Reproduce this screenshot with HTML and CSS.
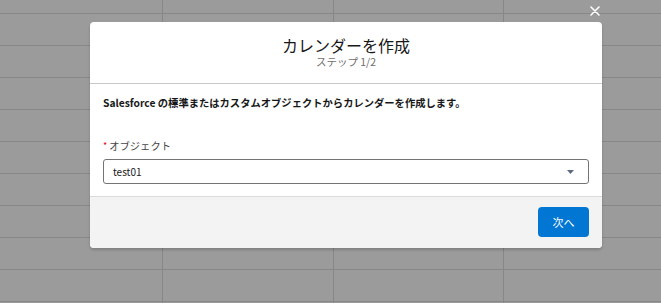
FILE: index.html
```html
<!DOCTYPE html>
<html lang="ja">
<head>
<meta charset="utf-8">
<title>カレンダーを作成</title>
<link rel="stylesheet" href="styles.css">
</head>
<body>
<div class="backdrop">
  <button class="close" aria-label="閉じる">
    <svg width="10" height="10" viewBox="0 0 10 10"><path d="M1 1 L9 9 M9 1 L1 9" stroke="#fff" stroke-width="1.6" stroke-linecap="round"/></svg>
  </button>
  <div class="modal">
    <header class="modal-header">
      <h2 class="title">カレンダーを作成</h2>
      <p class="subtitle">ステップ 1/2</p>
    </header>
    <div class="modal-body">
      <p class="intro">Salesforce の標準またはカスタムオブジェクトからカレンダーを作成します。</p>
      <label class="label"><abbr class="req">*</abbr>オブジェクト</label>
      <div class="select">
        <span class="select-value">test01</span>
        <svg class="caret" width="7" height="4" viewBox="0 0 7 4"><path d="M0 0 H7 L3.5 4 Z" fill="#5c6b80"/></svg>
      </div>
    </div>
    <footer class="modal-footer">
      <button class="btn-next">次へ</button>
    </footer>
  </div>
</div>
</body>
</html>
```
FILE: styles.css
```css
html, body {
  margin: 0;
  padding: 0;
}
body {
  width: 661px;
  height: 303px;
  overflow: hidden;
  font-family: "Noto Sans CJK JP", "Noto Sans", sans-serif;
}
.backdrop {
  position: relative;
  width: 661px;
  height: 303px;
  background-color: #9b9b9b;
  background-image:
    linear-gradient(90deg, transparent 162px, #878787 162px, #878787 163px, transparent 163px),
    linear-gradient(90deg, transparent 333px, #878787 333px, #878787 334px, transparent 334px),
    linear-gradient(90deg, transparent 503px, #878787 503px, #878787 504px, transparent 504px),
    repeating-linear-gradient(180deg, transparent 0, transparent 13px, #878787 13px, #878787 14px, transparent 14px, transparent 32px);
}
.close {
  position: absolute;
  left: 590px;
  top: 6px;
  width: 10px;
  height: 10px;
  padding: 0;
  border: 0;
  background: transparent;
  display: flex;
}
.modal {
  position: absolute;
  left: 90px;
  top: 22px;
  width: 512px;
  background: #fff;
  border-radius: 4px;
  box-shadow: 0 2px 3px rgba(0, 0, 0, 0.18);
}
.modal-header {
  height: 62px;
  box-sizing: border-box;
  padding-top: 13px;
  border-bottom: 1px solid #c9c9c9;
  display: flex;
  flex-direction: column;
  align-items: center;
}
.title {
  margin: 0;
  font-size: 16px;
  line-height: 20px;
  font-weight: 400;
  color: #181818;
}
.subtitle {
  margin: 1px 0 0;
  font-size: 10.5px;
  line-height: 12px;
  color: #706e6b;
}
.modal-body {
  padding: 12px 13px 12px;
}
.intro {
  margin: 0;
  font-size: 10.3px;
  line-height: 14px;
  font-weight: 700;
  color: #181818;
}
.label {
  display: flex;
  align-items: center;
  margin-top: 29px;
  font-size: 10.3px;
  line-height: 14px;
  color: #444;
}
.req {
  color: #ea001e;
  text-decoration: none;
  font-size: 9px;
  margin-right: 2px;
}
.select {
  margin-top: 6px;
  height: 25px;
  box-sizing: border-box;
  border: 1px solid #747474;
  border-radius: 3px;
  display: flex;
  align-items: center;
  justify-content: space-between;
  padding: 0 14px 0 9px;
}
.select-value {
  font-size: 10px;
  color: #181818;
}
.modal-footer {
  border-top: 1px solid #dddbda;
  background: #f3f3f3;
  border-radius: 0 0 4px 4px;
  padding: 10px 13px 11px;
  display: flex;
  justify-content: flex-end;
}
.btn-next {
  width: 51px;
  height: 30px;
  border: 0;
  border-radius: 4px;
  background: #0176d3;
  color: #fff;
  font-family: inherit;
  font-size: 11px;
  padding: 0;
}
```
